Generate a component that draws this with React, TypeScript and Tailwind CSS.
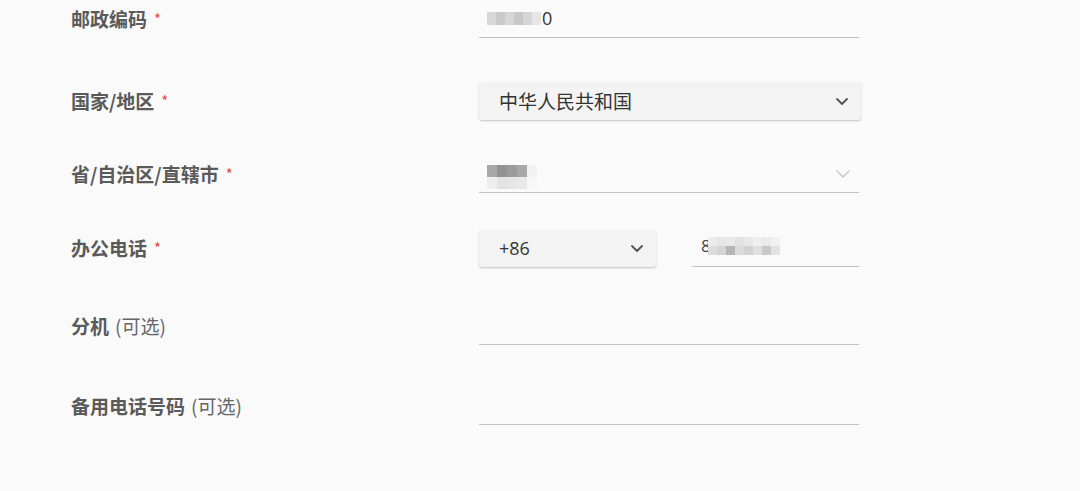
import React from "react";

const CJK = { fontFamily: '"Noto Sans CJK SC", "Noto Sans", sans-serif' };
const LAT = { fontFamily: '"Open Sans", "Noto Sans CJK SC", sans-serif' };

function Chevron({ light }: { light?: boolean }) {
  return (
    <svg
      width={light ? 14 : 12}
      height={light ? 8 : 7}
      viewBox={light ? "0 0 14 8" : "0 0 12 7"}
      fill="none"
      stroke={light ? "#c4c4c4" : "#555"}
      strokeWidth={light ? 1.3 : 1.8}
      strokeLinecap="round"
      strokeLinejoin="round"
    >
      {light ? <path d="M1 1l6 6 6-6" /> : <path d="M1 1l5 5 5-5" />}
    </svg>
  );
}

function Mosaic({ rows, w, h }: { rows: string[][]; w: number; h: number }) {
  return (
    <div className="flex flex-col">
      {rows.map((row, r) => (
        <div key={r} className="flex">
          {row.map((c, i) => (
            <div key={i} style={{ width: w, height: h, backgroundColor: c }} />
          ))}
        </div>
      ))}
    </div>
  );
}

function Label({ text, required, optional }: { text: string; required?: boolean; optional?: boolean }) {
  return (
    <div className="w-[408px] shrink-0 flex items-center text-[19px] font-bold text-[#5a5a5a]" style={CJK}>
      <span>{text}</span>
      {required && <span className="ml-[7px] text-[15px] text-[#e5484d] font-normal mt-[1px]">*</span>}
      {optional && <span className="ml-[6px] text-[19px] font-normal text-[#666]">(可选)</span>}
    </div>
  );
}

function Underline({ children, className }: { children?: React.ReactNode; className?: string }) {
  return (
    <div className={"h-[38px] border-b border-[#c2c2c2] flex items-center " + (className ?? "")}>
      {children}
    </div>
  );
}

export default function App() {
  return (
    <div className="w-[1080px] h-[491px] bg-[#fafafa] pl-[71px] overflow-hidden" style={CJK}>
      {/* 邮政编码 */}
      <div className="flex items-center h-[38px]">
        <Label text="邮政编码" required />
        <Underline className="w-[380px] pl-[8px]">
          <div className="flex items-center -mt-[1px]">
            <Mosaic w={9} h={13} rows={[["#d8d8d8", "#c9c9c9", "#d6d6d6", "#c8c8c8", "#d6d6d6", "#e6e6e6"]]} />
            <span className="text-[18px] text-[#333] ml-[1px]" style={LAT}>0</span>
          </div>
        </Underline>
      </div>

      {/* 国家/地区 */}
      <div className="flex items-center h-[38px] mt-[44px]">
        <Label text="国家/地区" required />
        <div className="w-[382px] h-[38px] bg-[#f3f3f3] rounded-[3px] shadow-[0_1px_2px_rgba(0,0,0,0.22)] flex items-center justify-between pl-[20px] pr-[13px]">
          <span className="text-[19px] text-[#333]">中华人民共和国</span>
          <Chevron />
        </div>
      </div>

      {/* 省/自治区/直辖市 */}
      <div className="flex items-center h-[38px] mt-[35px]">
        <Label text="省/自治区/直辖市" required />
        <Underline className="w-[380px] pl-[8px] pr-[9px] justify-between">
          <div className="mt-[6px]">
            <Mosaic
              w={10}
              h={12}
              rows={[
                ["#a9a9a9", "#939393", "#9c9c9c", "#a8a8a8", "#f2f2f2"],
                ["#eeeeee", "#e3e3e3", "#e6e6e6", "#e9e9e9", "#f7f7f7"],
              ]}
            />
          </div>
          <Chevron light />
        </Underline>
      </div>

      {/* 办公电话 */}
      <div className="flex items-center h-[38px] mt-[36px]">
        <Label text="办公电话" required />
        <div className="w-[177px] h-[37px] bg-[#f3f3f3] rounded-[3px] shadow-[0_1px_2px_rgba(0,0,0,0.22)] flex items-center justify-between pl-[20px] pr-[13px]">
          <span className="text-[18px] text-[#333]" style={LAT}>+86</span>
          <Chevron />
        </div>
        <Underline className="w-[167px] ml-[36px] pl-[9px] h-[36px]">
          <div className="flex items-center -mt-[4px]">
            <span className="text-[17px] text-[#444]" style={LAT}>8</span>
            <div className="-ml-[3px]">
              <Mosaic
                w={9}
                h={9}
                rows={[
                  ["#ececec", "#e6e6e6", "#e9e9e9", "#e2e2e2", "#e8e8e8", "#eeeeee", "#ebebeb", "#f1f1f1"],
                  ["#dcdcdc", "#d4d4d4", "#b5b5b5", "#dadada", "#d2d2d2", "#e0e0e0", "#c9c9c9", "#e2e2e2"],
                ]}
              />
            </div>
          </div>
        </Underline>
      </div>

      {/* 分机 */}
      <div className="flex items-center h-[38px] mt-[40px]">
        <Label text="分机" optional />
        <Underline className="w-[380px]" />
      </div>

      {/* 备用电话号码 */}
      <div className="flex items-center h-[38px] mt-[42px]">
        <Label text="备用电话号码" optional />
        <Underline className="w-[380px]" />
      </div>
    </div>
  );
}
